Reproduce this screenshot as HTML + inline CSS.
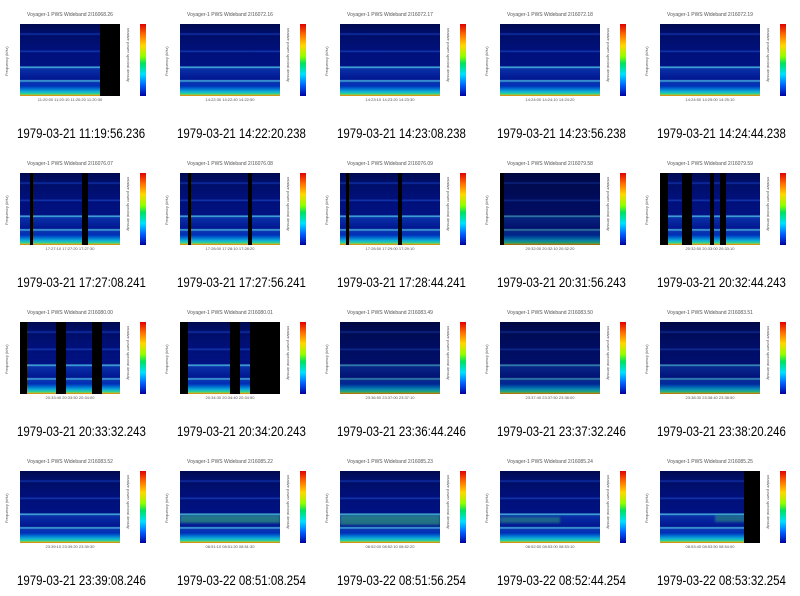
<!DOCTYPE html>
<html><head><meta charset="utf-8"><style>
body{margin:0;width:800px;height:596px;background:#fff;position:relative;overflow:hidden;font-family:"Liberation Sans",sans-serif}
.c{position:absolute;width:160px;height:149px}
.t{position:absolute;left:20px;width:100px;top:12px;font-size:5px;color:#555;text-align:center;white-space:nowrap}
.p{position:absolute;left:20px;top:24px;width:100px;height:72px;overflow:hidden;
background:linear-gradient(to bottom,#000a50 0%,#000e68 12%,#1030a8 14%,#000e68 16%,#00107a 36%,#1438b0 38%,#00107a 40%,#001282 58%,#48b8e0 60%,#0a30a8 62%,#001690 77%,#48b8e0 79%,#0a34b0 81%,#0030b8 86%,#0070d0 90%,#10b0d8 94%,#30d090 97%,#d0c020 99%,#e04000 100%)}
.p i{position:absolute;top:0;bottom:0;background:#000}
.p b{position:absolute;background:#40c070;opacity:.5;filter:blur(1px)}
.y{position:absolute;left:4px;top:76px;font-size:4px;color:#555;transform:rotate(-90deg);transform-origin:left top;white-space:nowrap}
.ax{position:absolute;left:15px;top:97px;width:110px;font-size:4px;color:#555;text-align:center;line-height:5px;white-space:nowrap}
.cb{position:absolute;left:140px;top:24px;width:6px;height:72px;background:linear-gradient(to bottom,#e00000,#ff7000 15%,#ffd800 30%,#90ff00 45%,#00e060 55%,#00e0ff 70%,#0060ff 85%,#0000a0)}
.cl{position:absolute;left:131px;top:28px;font-size:4px;color:#555;transform:rotate(90deg);transform-origin:left top;white-space:nowrap}
.cap{position:absolute;left:17px;top:125px;font-size:14px;color:#000;white-space:nowrap;transform:scaleX(.82);transform-origin:left top}
</style></head><body>

<div class="c" style="left:0;top:0"><div class="t">Voyager-1 PWS Wideband 2/16068.26</div><div class="y">Frequency (kHz)</div><div class="p"><i style="left:80px;width:20px"></i></div><div class="ax">11:20:00 11:20:10 11:20:20 11:20:30</div><div class="cl">relative power spectral density</div><div class="cb"></div><div class="cap">1979-03-21 11:19:56.236</div></div>
<div class="c" style="left:160px;top:0"><div class="t">Voyager-1 PWS Wideband 2/16072.16</div><div class="y">Frequency (kHz)</div><div class="p"></div><div class="ax">14:22:30 14:22:40 14:22:50</div><div class="cl">relative power spectral density</div><div class="cb"></div><div class="cap">1979-03-21 14:22:20.238</div></div>
<div class="c" style="left:320px;top:0"><div class="t">Voyager-1 PWS Wideband 2/16072.17</div><div class="y">Frequency (kHz)</div><div class="p"></div><div class="ax">14:23:10 14:23:20 14:23:30</div><div class="cl">relative power spectral density</div><div class="cb"></div><div class="cap">1979-03-21 14:23:08.238</div></div>
<div class="c" style="left:480px;top:0"><div class="t">Voyager-1 PWS Wideband 2/16072.18</div><div class="y">Frequency (kHz)</div><div class="p"></div><div class="ax">14:24:00 14:24:10 14:24:20</div><div class="cl">relative power spectral density</div><div class="cb"></div><div class="cap">1979-03-21 14:23:56.238</div></div>
<div class="c" style="left:640px;top:0"><div class="t">Voyager-1 PWS Wideband 2/16072.19</div><div class="y">Frequency (kHz)</div><div class="p"></div><div class="ax">14:24:50 14:25:00 14:25:10</div><div class="cl">relative power spectral density</div><div class="cb"></div><div class="cap">1979-03-21 14:24:44.238</div></div>

<div class="c" style="left:0;top:149px"><div class="t">Voyager-1 PWS Wideband 2/16076.07</div><div class="y">Frequency (kHz)</div><div class="p"><i style="left:10px;width:3px"></i><i style="left:62px;width:6px"></i></div><div class="ax">17:27:10 17:27:20 17:27:30</div><div class="cl">relative power spectral density</div><div class="cb"></div><div class="cap">1979-03-21 17:27:08.241</div></div>
<div class="c" style="left:160px;top:149px"><div class="t">Voyager-1 PWS Wideband 2/16076.08</div><div class="y">Frequency (kHz)</div><div class="p"><i style="left:8px;width:3px"></i><i style="left:68px;width:4px"></i></div><div class="ax">17:28:00 17:28:10 17:28:20</div><div class="cl">relative power spectral density</div><div class="cb"></div><div class="cap">1979-03-21 17:27:56.241</div></div>
<div class="c" style="left:320px;top:149px"><div class="t">Voyager-1 PWS Wideband 2/16076.09</div><div class="y">Frequency (kHz)</div><div class="p"><i style="left:6px;width:3px"></i><i style="left:58px;width:4px"></i></div><div class="ax">17:28:50 17:29:00 17:29:10</div><div class="cl">relative power spectral density</div><div class="cb"></div><div class="cap">1979-03-21 17:28:44.241</div></div>
<div class="c" style="left:480px;top:149px"><div class="t">Voyager-1 PWS Wideband 2/16079.58</div><div class="y">Frequency (kHz)</div><div class="p" style="filter:brightness(.75)"><i style="left:0;width:4px"></i></div><div class="ax">20:32:00 20:32:10 20:32:20</div><div class="cl">relative power spectral density</div><div class="cb"></div><div class="cap">1979-03-21 20:31:56.243</div></div>
<div class="c" style="left:640px;top:149px"><div class="t">Voyager-1 PWS Wideband 2/16079.59</div><div class="y">Frequency (kHz)</div><div class="p"><i style="left:0;width:8px"></i><i style="left:22px;width:10px"></i><i style="left:50px;width:4px"></i><i style="left:60px;width:6px"></i></div><div class="ax">20:32:50 20:33:00 20:33:10</div><div class="cl">relative power spectral density</div><div class="cb"></div><div class="cap">1979-03-21 20:32:44.243</div></div>

<div class="c" style="left:0;top:298px"><div class="t">Voyager-1 PWS Wideband 2/16080.00</div><div class="y">Frequency (kHz)</div><div class="p"><i style="left:0;width:7px"></i><i style="left:36px;width:10px"></i><i style="left:72px;width:10px"></i></div><div class="ax">20:33:40 20:33:50 20:34:00</div><div class="cl">relative power spectral density</div><div class="cb"></div><div class="cap">1979-03-21 20:33:32.243</div></div>
<div class="c" style="left:160px;top:298px"><div class="t">Voyager-1 PWS Wideband 2/16080.01</div><div class="y">Frequency (kHz)</div><div class="p"><i style="left:0;width:8px"></i><i style="left:50px;width:10px"></i><i style="left:70px;width:30px"></i></div><div class="ax">20:34:30 20:34:40 20:34:50</div><div class="cl">relative power spectral density</div><div class="cb"></div><div class="cap">1979-03-21 20:34:20.243</div></div>
<div class="c" style="left:320px;top:298px"><div class="t">Voyager-1 PWS Wideband 2/16083.49</div><div class="y">Frequency (kHz)</div><div class="p" style="filter:brightness(.8)"></div><div class="ax">23:36:50 23:37:00 23:37:10</div><div class="cl">relative power spectral density</div><div class="cb"></div><div class="cap">1979-03-21 23:36:44.246</div></div>
<div class="c" style="left:480px;top:298px"><div class="t">Voyager-1 PWS Wideband 2/16083.50</div><div class="y">Frequency (kHz)</div><div class="p" style="filter:brightness(.8)"></div><div class="ax">23:37:40 23:37:50 23:38:00</div><div class="cl">relative power spectral density</div><div class="cb"></div><div class="cap">1979-03-21 23:37:32.246</div></div>
<div class="c" style="left:640px;top:298px"><div class="t">Voyager-1 PWS Wideband 2/16083.51</div><div class="y">Frequency (kHz)</div><div class="p" style="filter:brightness(.85)"></div><div class="ax">23:38:30 23:38:40 23:38:50</div><div class="cl">relative power spectral density</div><div class="cb"></div><div class="cap">1979-03-21 23:38:20.246</div></div>

<div class="c" style="left:0;top:447px"><div class="t">Voyager-1 PWS Wideband 2/16083.52</div><div class="y">Frequency (kHz)</div><div class="p"></div><div class="ax">23:39:10 23:39:20 23:39:30</div><div class="cl">relative power spectral density</div><div class="cb"></div><div class="cap">1979-03-21 23:39:08.246</div></div>
<div class="c" style="left:160px;top:447px"><div class="t">Voyager-1 PWS Wideband 2/16085.22</div><div class="y">Frequency (kHz)</div><div class="p"><b style="left:0;width:100px;top:44px;height:8px"></b></div><div class="ax">08:51:10 08:51:20 08:51:30</div><div class="cl">relative power spectral density</div><div class="cb"></div><div class="cap">1979-03-22 08:51:08.254</div></div>
<div class="c" style="left:320px;top:447px"><div class="t">Voyager-1 PWS Wideband 2/16085.23</div><div class="y">Frequency (kHz)</div><div class="p"><b style="left:0;width:100px;top:44px;height:10px"></b></div><div class="ax">08:52:00 08:52:10 08:52:20</div><div class="cl">relative power spectral density</div><div class="cb"></div><div class="cap">1979-03-22 08:51:56.254</div></div>
<div class="c" style="left:480px;top:447px"><div class="t">Voyager-1 PWS Wideband 2/16085.24</div><div class="y">Frequency (kHz)</div><div class="p"><b style="left:0;width:60px;top:46px;height:6px;opacity:.4"></b></div><div class="ax">08:52:50 08:53:00 08:53:10</div><div class="cl">relative power spectral density</div><div class="cb"></div><div class="cap">1979-03-22 08:52:44.254</div></div>
<div class="c" style="left:640px;top:447px"><div class="t">Voyager-1 PWS Wideband 2/16085.25</div><div class="y">Frequency (kHz)</div><div class="p"><b style="left:55px;width:30px;top:44px;height:7px;opacity:.4"></b><i style="left:84px;width:16px"></i></div><div class="ax">08:53:40 08:53:50 08:54:00</div><div class="cl">relative power spectral density</div><div class="cb"></div><div class="cap">1979-03-22 08:53:32.254</div></div>
</body></html>
